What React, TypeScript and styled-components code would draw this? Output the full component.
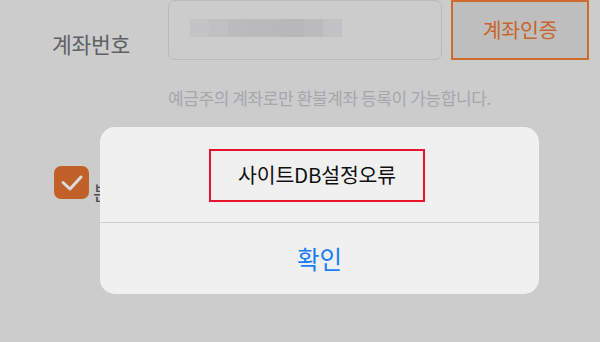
import React from "react";
import styled, { createGlobalStyle } from "styled-components";

const Global = createGlobalStyle`
  html, body { margin: 0; padding: 0; }
  body {
    width: 600px; height: 342px; overflow: hidden;
    background: #cccccc;
    font-family: "Noto Sans CJK KR", "Noto Sans", sans-serif;
  }
`;

const Page = styled.div`
  position: relative;
  width: 600px;
  height: 342px;
  background: #cccccc;
  overflow: hidden;
`;

const Form = styled.div`
  display: flex;
  flex-direction: column;
  padding-left: 52px;
`;

const Row = styled.div`
  display: flex;
  align-items: center;
  height: 60px;
`;

const Label = styled.div`
  width: 116px;
  font-size: 21.5px;
  color: #5f6166;
  padding-top: 27px;
  letter-spacing: -0.3px;
`;

const Input = styled.div`
  box-sizing: border-box;
  width: 274px;
  height: 60px;
  border: 1.5px solid #b9b9bb;
  border-radius: 7px;
  display: flex;
  align-items: center;
  padding-left: 21px;
  padding-bottom: 4px;
`;

const Mosaic = styled.div`
  display: flex;
  height: 18px;
`;

const Tile = styled.div<{ $c: string }>`
  width: 19px;
  height: 18px;
  background: ${(p) => p.$c};
`;

const VerifyButton = styled.button`
  box-sizing: border-box;
  margin-left: 9px;
  width: 138px;
  height: 60px;
  background: #bebebe;
  border: 2px solid #d0692c;
  color: #c9652c;
  font-family: inherit;
  font-size: 20.5px;
  letter-spacing: -0.2px;
  padding: 0 0 2px;
`;

const Help = styled.div`
  margin-top: 25px;
  margin-left: 116px;
  font-size: 17px;
  color: #a5a7ab;
  letter-spacing: -0.4px;
`;

const CheckRow = styled.div`
  display: flex;
  align-items: flex-end;
  margin-top: 56px;
  margin-left: 2px;
  gap: 4px;
`;

const CheckBox = styled.div`
  width: 35px;
  height: 33px;
  border-radius: 7px;
  background: #c2602a;
  display: flex;
  align-items: center;
  justify-content: center;
`;

const CheckText = styled.div`
  font-size: 20px;
  color: #4a4d55;
  line-height: 1;
  margin-bottom: -4px;
`;

const Dialog = styled.div`
  position: absolute;
  left: 100px;
  top: 127px;
  width: 439px;
  height: 167px;
  border-radius: 15px;
  background: #f0f0f0;
  display: flex;
  flex-direction: column;
  overflow: hidden;
`;

const Message = styled.div`
  height: 96px;
  display: flex;
  align-items: center;
  justify-content: center;
  border-bottom: 1px solid #cfcfd1;
  padding-right: 5px;
  box-sizing: border-box;
  padding-top: 1px;
`;

const Highlight = styled.div`
  box-sizing: border-box;
  width: 216px;
  height: 53px;
  border: 2px solid #e8132c;
  display: flex;
  align-items: center;
  justify-content: center;
  font-size: 20.5px;
  color: #111;
  letter-spacing: -0.2px;
  padding-bottom: 2px;
`;

const Confirm = styled.button`
  flex: 1;
  border: none;
  background: transparent;
  color: #1a7cf6;
  font-family: inherit;
  font-size: 24.5px;
  padding: 0;
`;

const tiles = ["#c4c4c6", "#c0c0c2", "#bbbbbd", "#bababc", "#b9b9bb", "#b8b8ba", "#bbbbbd", "#c2c2c4"];

export default function App() {
  return (
    <Page>
      <Global />
      <Form>
        <Row>
          <Label>계좌번호</Label>
          <Input>
            <Mosaic>
              {tiles.map((c, i) => (
                <Tile key={i} $c={c} />
              ))}
            </Mosaic>
          </Input>
          <VerifyButton>계좌인증</VerifyButton>
        </Row>
        <Help>예금주의 계좌로만 환불계좌 등록이 가능합니다.</Help>
        <CheckRow>
          <CheckBox>
            <svg width="24" height="18" viewBox="0 0 24 18">
              <path d="M3 8.5 L10 15 L21 3" fill="none" stroke="#dcdcdc" strokeWidth="3" strokeLinecap="round" strokeLinejoin="round" />
            </svg>
          </CheckBox>
          <CheckText>본인 명의 계좌</CheckText>
        </CheckRow>
      </Form>
      <Dialog>
        <Message>
          <Highlight>사이트DB설정오류</Highlight>
        </Message>
        <Confirm>확인</Confirm>
      </Dialog>
    </Page>
  );
}
